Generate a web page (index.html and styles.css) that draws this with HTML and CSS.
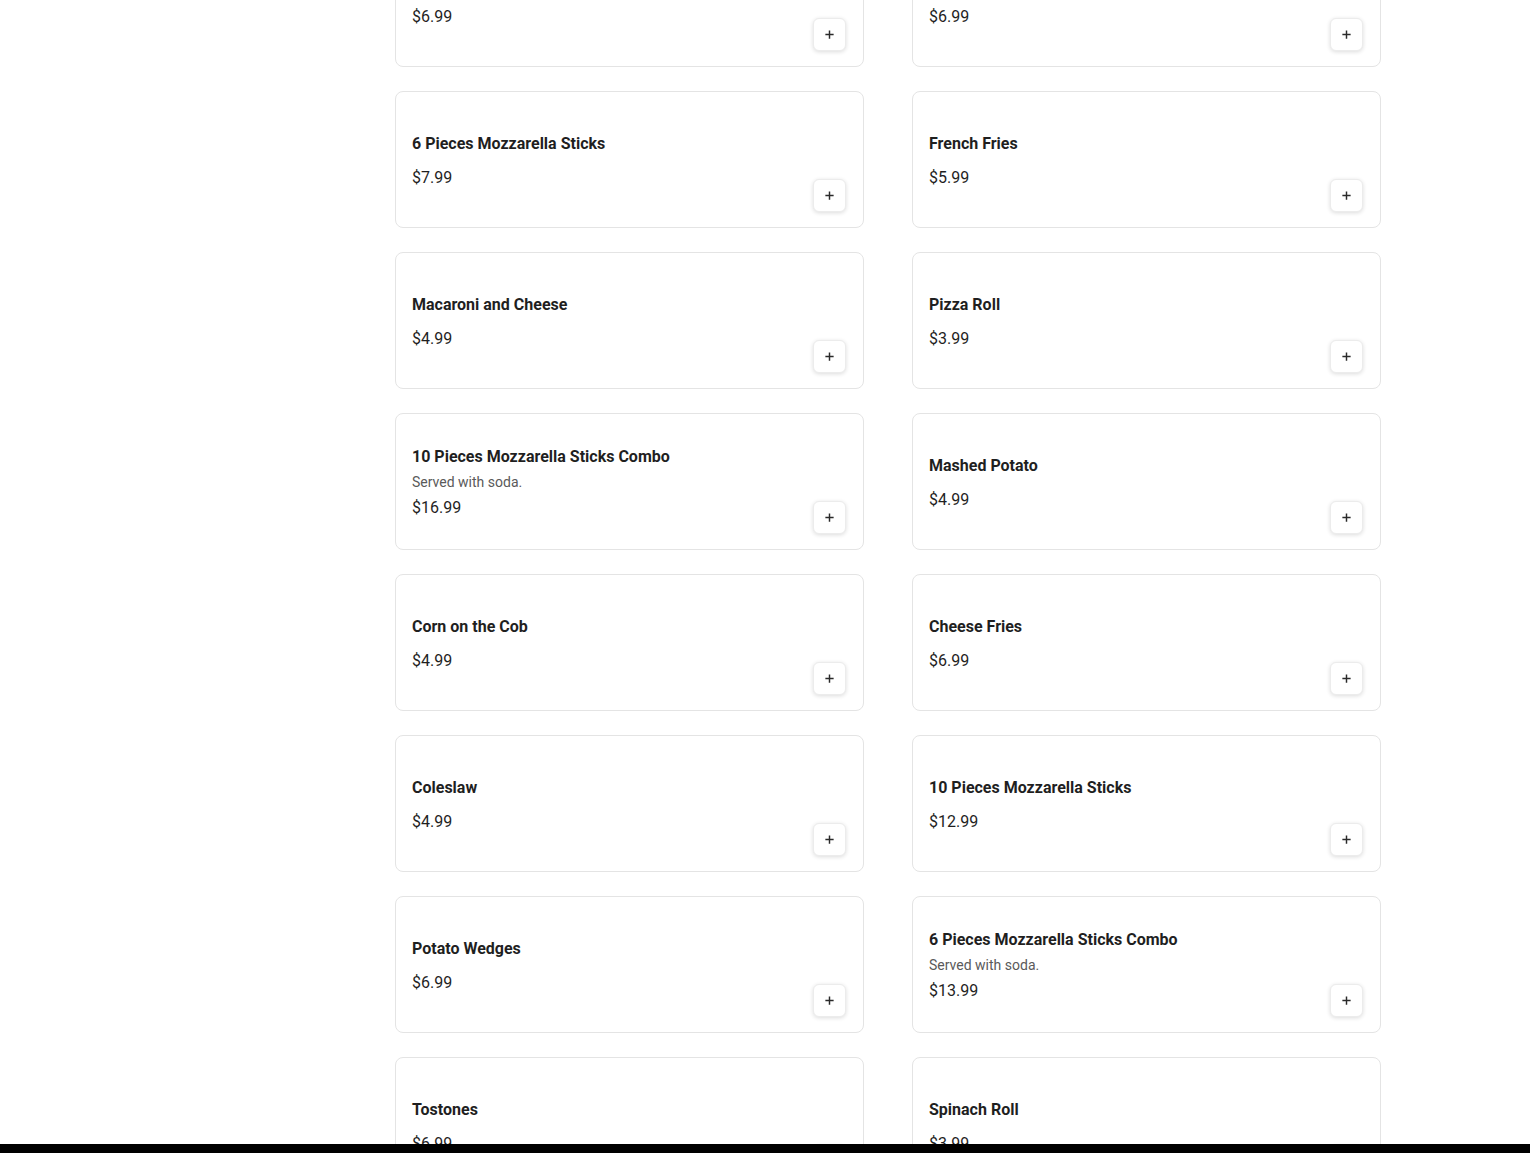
FILE: index.html
```html
<!DOCTYPE html>
<html lang="en">
<head>
<meta charset="utf-8">
<title>Menu</title>
<link rel="stylesheet" href="styles.css">
</head>
<body>
<main class="menu">
  <div class="grid">
    <div class="card"><div class="info"><div class="title">Chicken Nuggets</div><div class="price">$6.99</div></div><button class="add"><svg viewBox="0 0 12 12"><path d="M6 1.5v9M1.5 6h9"/></svg></button></div>
    <div class="card"><div class="info"><div class="title">Onion Rings</div><div class="price">$6.99</div></div><button class="add"><svg viewBox="0 0 12 12"><path d="M6 1.5v9M1.5 6h9"/></svg></button></div>

    <div class="card"><div class="info"><div class="title">6 Pieces Mozzarella Sticks</div><div class="price">$7.99</div></div><button class="add"><svg viewBox="0 0 12 12"><path d="M6 1.5v9M1.5 6h9"/></svg></button></div>
    <div class="card"><div class="info"><div class="title">French Fries</div><div class="price">$5.99</div></div><button class="add"><svg viewBox="0 0 12 12"><path d="M6 1.5v9M1.5 6h9"/></svg></button></div>

    <div class="card"><div class="info"><div class="title">Macaroni and Cheese</div><div class="price">$4.99</div></div><button class="add"><svg viewBox="0 0 12 12"><path d="M6 1.5v9M1.5 6h9"/></svg></button></div>
    <div class="card"><div class="info"><div class="title">Pizza Roll</div><div class="price">$3.99</div></div><button class="add"><svg viewBox="0 0 12 12"><path d="M6 1.5v9M1.5 6h9"/></svg></button></div>

    <div class="card"><div class="info"><div class="title">10 Pieces Mozzarella Sticks Combo</div><div class="desc">Served with soda.</div><div class="price">$16.99</div></div><button class="add"><svg viewBox="0 0 12 12"><path d="M6 1.5v9M1.5 6h9"/></svg></button></div>
    <div class="card"><div class="info"><div class="title">Mashed Potato</div><div class="price">$4.99</div></div><button class="add"><svg viewBox="0 0 12 12"><path d="M6 1.5v9M1.5 6h9"/></svg></button></div>

    <div class="card"><div class="info"><div class="title">Corn on the Cob</div><div class="price">$4.99</div></div><button class="add"><svg viewBox="0 0 12 12"><path d="M6 1.5v9M1.5 6h9"/></svg></button></div>
    <div class="card"><div class="info"><div class="title">Cheese Fries</div><div class="price">$6.99</div></div><button class="add"><svg viewBox="0 0 12 12"><path d="M6 1.5v9M1.5 6h9"/></svg></button></div>

    <div class="card"><div class="info"><div class="title">Coleslaw</div><div class="price">$4.99</div></div><button class="add"><svg viewBox="0 0 12 12"><path d="M6 1.5v9M1.5 6h9"/></svg></button></div>
    <div class="card"><div class="info"><div class="title">10 Pieces Mozzarella Sticks</div><div class="price">$12.99</div></div><button class="add"><svg viewBox="0 0 12 12"><path d="M6 1.5v9M1.5 6h9"/></svg></button></div>

    <div class="card"><div class="info"><div class="title">Potato Wedges</div><div class="price">$6.99</div></div><button class="add"><svg viewBox="0 0 12 12"><path d="M6 1.5v9M1.5 6h9"/></svg></button></div>
    <div class="card"><div class="info"><div class="title">6 Pieces Mozzarella Sticks Combo</div><div class="desc">Served with soda.</div><div class="price">$13.99</div></div><button class="add"><svg viewBox="0 0 12 12"><path d="M6 1.5v9M1.5 6h9"/></svg></button></div>

    <div class="card"><div class="info"><div class="title">Tostones</div><div class="price">$6.99</div></div><button class="add"><svg viewBox="0 0 12 12"><path d="M6 1.5v9M1.5 6h9"/></svg></button></div>
    <div class="card"><div class="info"><div class="title">Spinach Roll</div><div class="price">$3.99</div></div><button class="add"><svg viewBox="0 0 12 12"><path d="M6 1.5v9M1.5 6h9"/></svg></button></div>
  </div>
</main>
<div class="bottom-bar"></div>
</body>
</html>
```

FILE: styles.css
```css
html, body {
  margin: 0;
  padding: 0;
  background: #ffffff;
  font-family: Roboto, "Liberation Sans", Arial, sans-serif;
  color: #1f1f1f;
  overflow: hidden;
  height: 1153px;
}

.menu {
  padding-left: 395px;
  width: 986px;
  margin-top: -70px;
}

.grid {
  display: grid;
  grid-template-columns: 469px 469px;
  column-gap: 48px;
  row-gap: 24px;
}

.card {
  box-sizing: border-box;
  height: 137px;
  border: 1px solid #e4e4e4;
  border-radius: 8px;
  background: #fff;
  padding: 0 17px 15px 16px;
  display: flex;
  justify-content: space-between;
  align-items: flex-end;
}

.info {
  align-self: center;
  display: flex;
  flex-direction: column;
  padding-top: 17px;
}

.title {
  font-size: 16px;
  font-weight: 700;
  line-height: 24px;
  color: #1f1f1f;
}

.desc {
  font-size: 14px;
  line-height: 20px;
  color: #5a5a5a;
  margin-top: 3px;
}

.price {
  font-size: 16px;
  line-height: 24px;
  color: #1f1f1f;
  margin-top: 10px;
}

.desc + .price {
  margin-top: 4px;
}

.add {
  width: 33px;
  height: 33px;
  padding: 0;
  border: 1px solid #ececec;
  border-radius: 6px;
  background: #fff;
  box-shadow: 0 1px 4px rgba(0, 0, 0, 0.14);
  display: flex;
  align-items: center;
  justify-content: center;
  cursor: pointer;
}

.add svg {
  width: 11px;
  height: 11px;
  fill: none;
  stroke: #2a2a2a;
  stroke-width: 1.6;
}

.bottom-bar {
  position: fixed;
  left: 0;
  right: 0;
  bottom: 0;
  height: 9px;
  background: #000;
}
```
